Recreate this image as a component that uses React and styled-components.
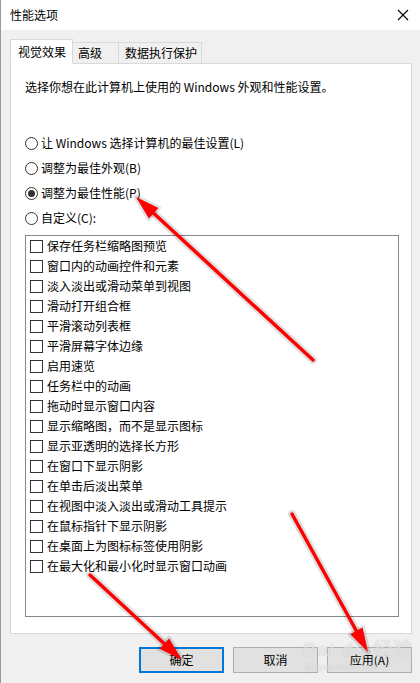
import React from 'react';
import styled, { createGlobalStyle } from 'styled-components';

const GlobalStyle = createGlobalStyle`
    html, body {
        margin: 0;
        padding: 0;
        background: #f0f0f0;
    }
    body {
        font-family: 'Noto Sans CJK SC', 'Microsoft YaHei', sans-serif;
        font-size: 12px;
        color: #000;
    }
`;

const Window = styled.div`
    position: relative;
    width: 420px;
    height: 683px;
    background: #f0f0f0;
    border-left: 1px solid #9a9a9a;
    box-sizing: border-box;
    display: flex;
    flex-direction: column;
    overflow: hidden;
`;

const TitleBar = styled.div`
    height: 30px;
    background: #fff;
    display: flex;
    align-items: center;
    justify-content: space-between;
    padding: 0 9px 0 9px;
    flex-shrink: 0;
`;

const Title = styled.span`
    font-size: 12px;
    line-height: 16px;
`;

const Close = styled.svg`
    width: 12px;
    height: 12px;
    margin-right: 2px;
`;

const Body = styled.div`
    padding: 9px 8px 0 9px;
    display: flex;
    flex-direction: column;
`;

const Tabs = styled.div`
    display: flex;
    align-items: flex-end;
    height: 25px;
    margin-bottom: -1px;
    position: relative;
    z-index: 1;
`;

const Tab = styled.div`
    box-sizing: border-box;
    height: ${p => (p.active ? '25px' : '22px')};
    width: ${p => p.w}px;
    padding-left: ${p => p.pl}px;
    background: ${p => (p.active ? '#fff' : '#f0f0f0')};
    border: 1px solid #d9d9d9;
    border-bottom: ${p => (p.active ? '1px solid #fff' : '1px solid #d9d9d9')};
    border-left: ${p => (p.first ? '1px solid #d9d9d9' : 'none')};
    display: flex;
    align-items: center;
    line-height: 16px;
`;

const Panel = styled.div`
    box-sizing: border-box;
    height: 571px;
    background: #fff;
    border: 1px solid #d9d9d9;
    padding: 15px 12px 0 14px;
    display: flex;
    flex-direction: column;
`;

const Intro = styled.div`
    line-height: 16px;
    height: 16px;
`;

const Radios = styled.div`
    display: flex;
    flex-direction: column;
    margin-top: 40px;
    gap: 9px;
`;

const RadioRow = styled.div`
    display: flex;
    align-items: center;
    height: 16px;
    line-height: 16px;
`;

const RadioDot = styled.span`
    box-sizing: border-box;
    width: 13px;
    height: 13px;
    border: 1px solid #333;
    border-radius: 50%;
    margin-right: 3px;
    display: flex;
    align-items: center;
    justify-content: center;
    &::after {
        content: '';
        width: 7px;
        height: 7px;
        border-radius: 50%;
        background: ${p => (p.checked ? '#333' : 'transparent')};
    }
`;

const ListBox = styled.div`
    box-sizing: border-box;
    margin-top: 9px;
    height: 382px;
    width: 374px;
    border: 1px solid #828790;
    padding: 0 0 0 4px;
`;

const CheckRow = styled.div`
    display: flex;
    align-items: center;
    height: 20px;
    line-height: 16px;
`;

const Box = styled.span`
    box-sizing: border-box;
    width: 13px;
    height: 13px;
    border: 1px solid #333;
    margin-right: 4px;
    flex-shrink: 0;
`;

const Footer = styled.div`
    display: flex;
    justify-content: flex-end;
    gap: 9px;
    padding-top: 13px;
`;

const Button = styled.div`
    box-sizing: border-box;
    width: 85px;
    height: 26px;
    background: #e1e1e1;
    border: ${p => (p.primary ? '2px solid #0078d7' : '1px solid #adadad')};
    display: flex;
    align-items: center;
    justify-content: center;
    line-height: 16px;
`;

const Overlay = styled.svg`
    position: absolute;
    left: -1px;
    top: 0;
    width: 420px;
    height: 683px;
    pointer-events: none;
`;

const Watermark = styled.div`
    position: absolute;
    left: 302px;
    top: 640px;
    color: rgba(255, 255, 255, 0.5);
    font-family: 'Liberation Sans', 'Noto Sans CJK SC', sans-serif;
    text-shadow: 0 0 1px rgba(150, 150, 150, 0.45);
    pointer-events: none;
    line-height: 1;
`;

const WmBig = styled.div`
    font-size: 19px;
    font-weight: bold;
    letter-spacing: 1px;
`;

const WmSmall = styled.div`
    font-size: 9px;
    margin-top: 4px;
    margin-left: 2px;
`;

const radios = [
    { label: '让 Windows 选择计算机的最佳设置(L)' },
    { label: '调整为最佳外观(B)' },
    { label: '调整为最佳性能(P)', checked: true },
    { label: '自定义(C):' },
];

const options = [
    '保存任务栏缩略图预览',
    '窗口内的动画控件和元素',
    '淡入淡出或滑动菜单到视图',
    '滑动打开组合框',
    '平滑滚动列表框',
    '平滑屏幕字体边缘',
    '启用速览',
    '任务栏中的动画',
    '拖动时显示窗口内容',
    '显示缩略图，而不是显示图标',
    '显示亚透明的选择长方形',
    '在窗口下显示阴影',
    '在单击后淡出菜单',
    '在视图中淡入淡出或滑动工具提示',
    '在鼠标指针下显示阴影',
    '在桌面上为图标标签使用阴影',
    '在最大化和最小化时显示窗口动画',
];

// red annotation arrows: tail -> tip
const arrows = [
    { from: [313, 360], to: [136, 197] },
    { from: [90, 575], to: [182, 660] },
    { from: [292, 514], to: [368, 652] },
];

function Arrow({ from, to }) {
    const dx = to[0] - from[0];
    const dy = to[1] - from[1];
    const len = Math.hypot(dx, dy);
    const ux = dx / len;
    const uy = dy / len;
    const bx = to[0] - ux * 24;
    const by = to[1] - uy * 24;
    const nx = -uy * 7;
    const ny = ux * 7;
    const head = `${to[0]},${to[1]} ${bx + nx},${by + ny} ${bx - nx},${by - ny}`;
    return (
        <g>
            <line x1={from[0]} y1={from[1]} x2={bx + ux * 4} y2={by + uy * 4}
                stroke="rgba(0,0,0,0.12)" strokeWidth="8" strokeLinecap="round" />
            <polygon points={head} fill="rgba(0,0,0,0.12)" stroke="rgba(0,0,0,0.12)"
                strokeWidth="5" strokeLinejoin="round" />
            <line x1={from[0]} y1={from[1]} x2={bx + ux * 4} y2={by + uy * 4}
                stroke="#ff0000" strokeWidth="3.5" strokeLinecap="round" />
            <polygon points={head} fill="#ff0000" />
        </g>
    );
}

export default function App() {
    return (
        <Window>
            <GlobalStyle />
            <TitleBar>
                <Title>性能选项</Title>
                <Close viewBox="0 0 12 12">
                    <path d="M1 1 L11 11 M11 1 L1 11" stroke="#000" strokeWidth="1.1" />
                </Close>
            </TitleBar>
            <Body>
                <Tabs>
                    <Tab active first w={63} pl={7}>视觉效果</Tab>
                    <Tab w={46} pl={5}>高级</Tab>
                    <Tab w={83} pl={6}>数据执行保护</Tab>
                </Tabs>
                <Panel>
                    <Intro>选择你想在此计算机上使用的 Windows 外观和性能设置。</Intro>
                    <Radios>
                        {radios.map(r => (
                            <RadioRow key={r.label}>
                                <RadioDot checked={r.checked} />
                                {r.label}
                            </RadioRow>
                        ))}
                    </Radios>
                    <ListBox>
                        {options.map(o => (
                            <CheckRow key={o}>
                                <Box />
                                {o}
                            </CheckRow>
                        ))}
                    </ListBox>
                </Panel>
                <Footer>
                    <Button primary>确定</Button>
                    <Button>取消</Button>
                    <Button>应用(A)</Button>
                </Footer>
            </Body>
            <Watermark>
                <WmBig>Bai du 经验</WmBig>
                <WmSmall>jingyan.baidu.com</WmSmall>
            </Watermark>
            <Overlay viewBox="0 0 420 683">
                {arrows.map((a, i) => <Arrow key={i} {...a} />)}
            </Overlay>
        </Window>
    );
}
